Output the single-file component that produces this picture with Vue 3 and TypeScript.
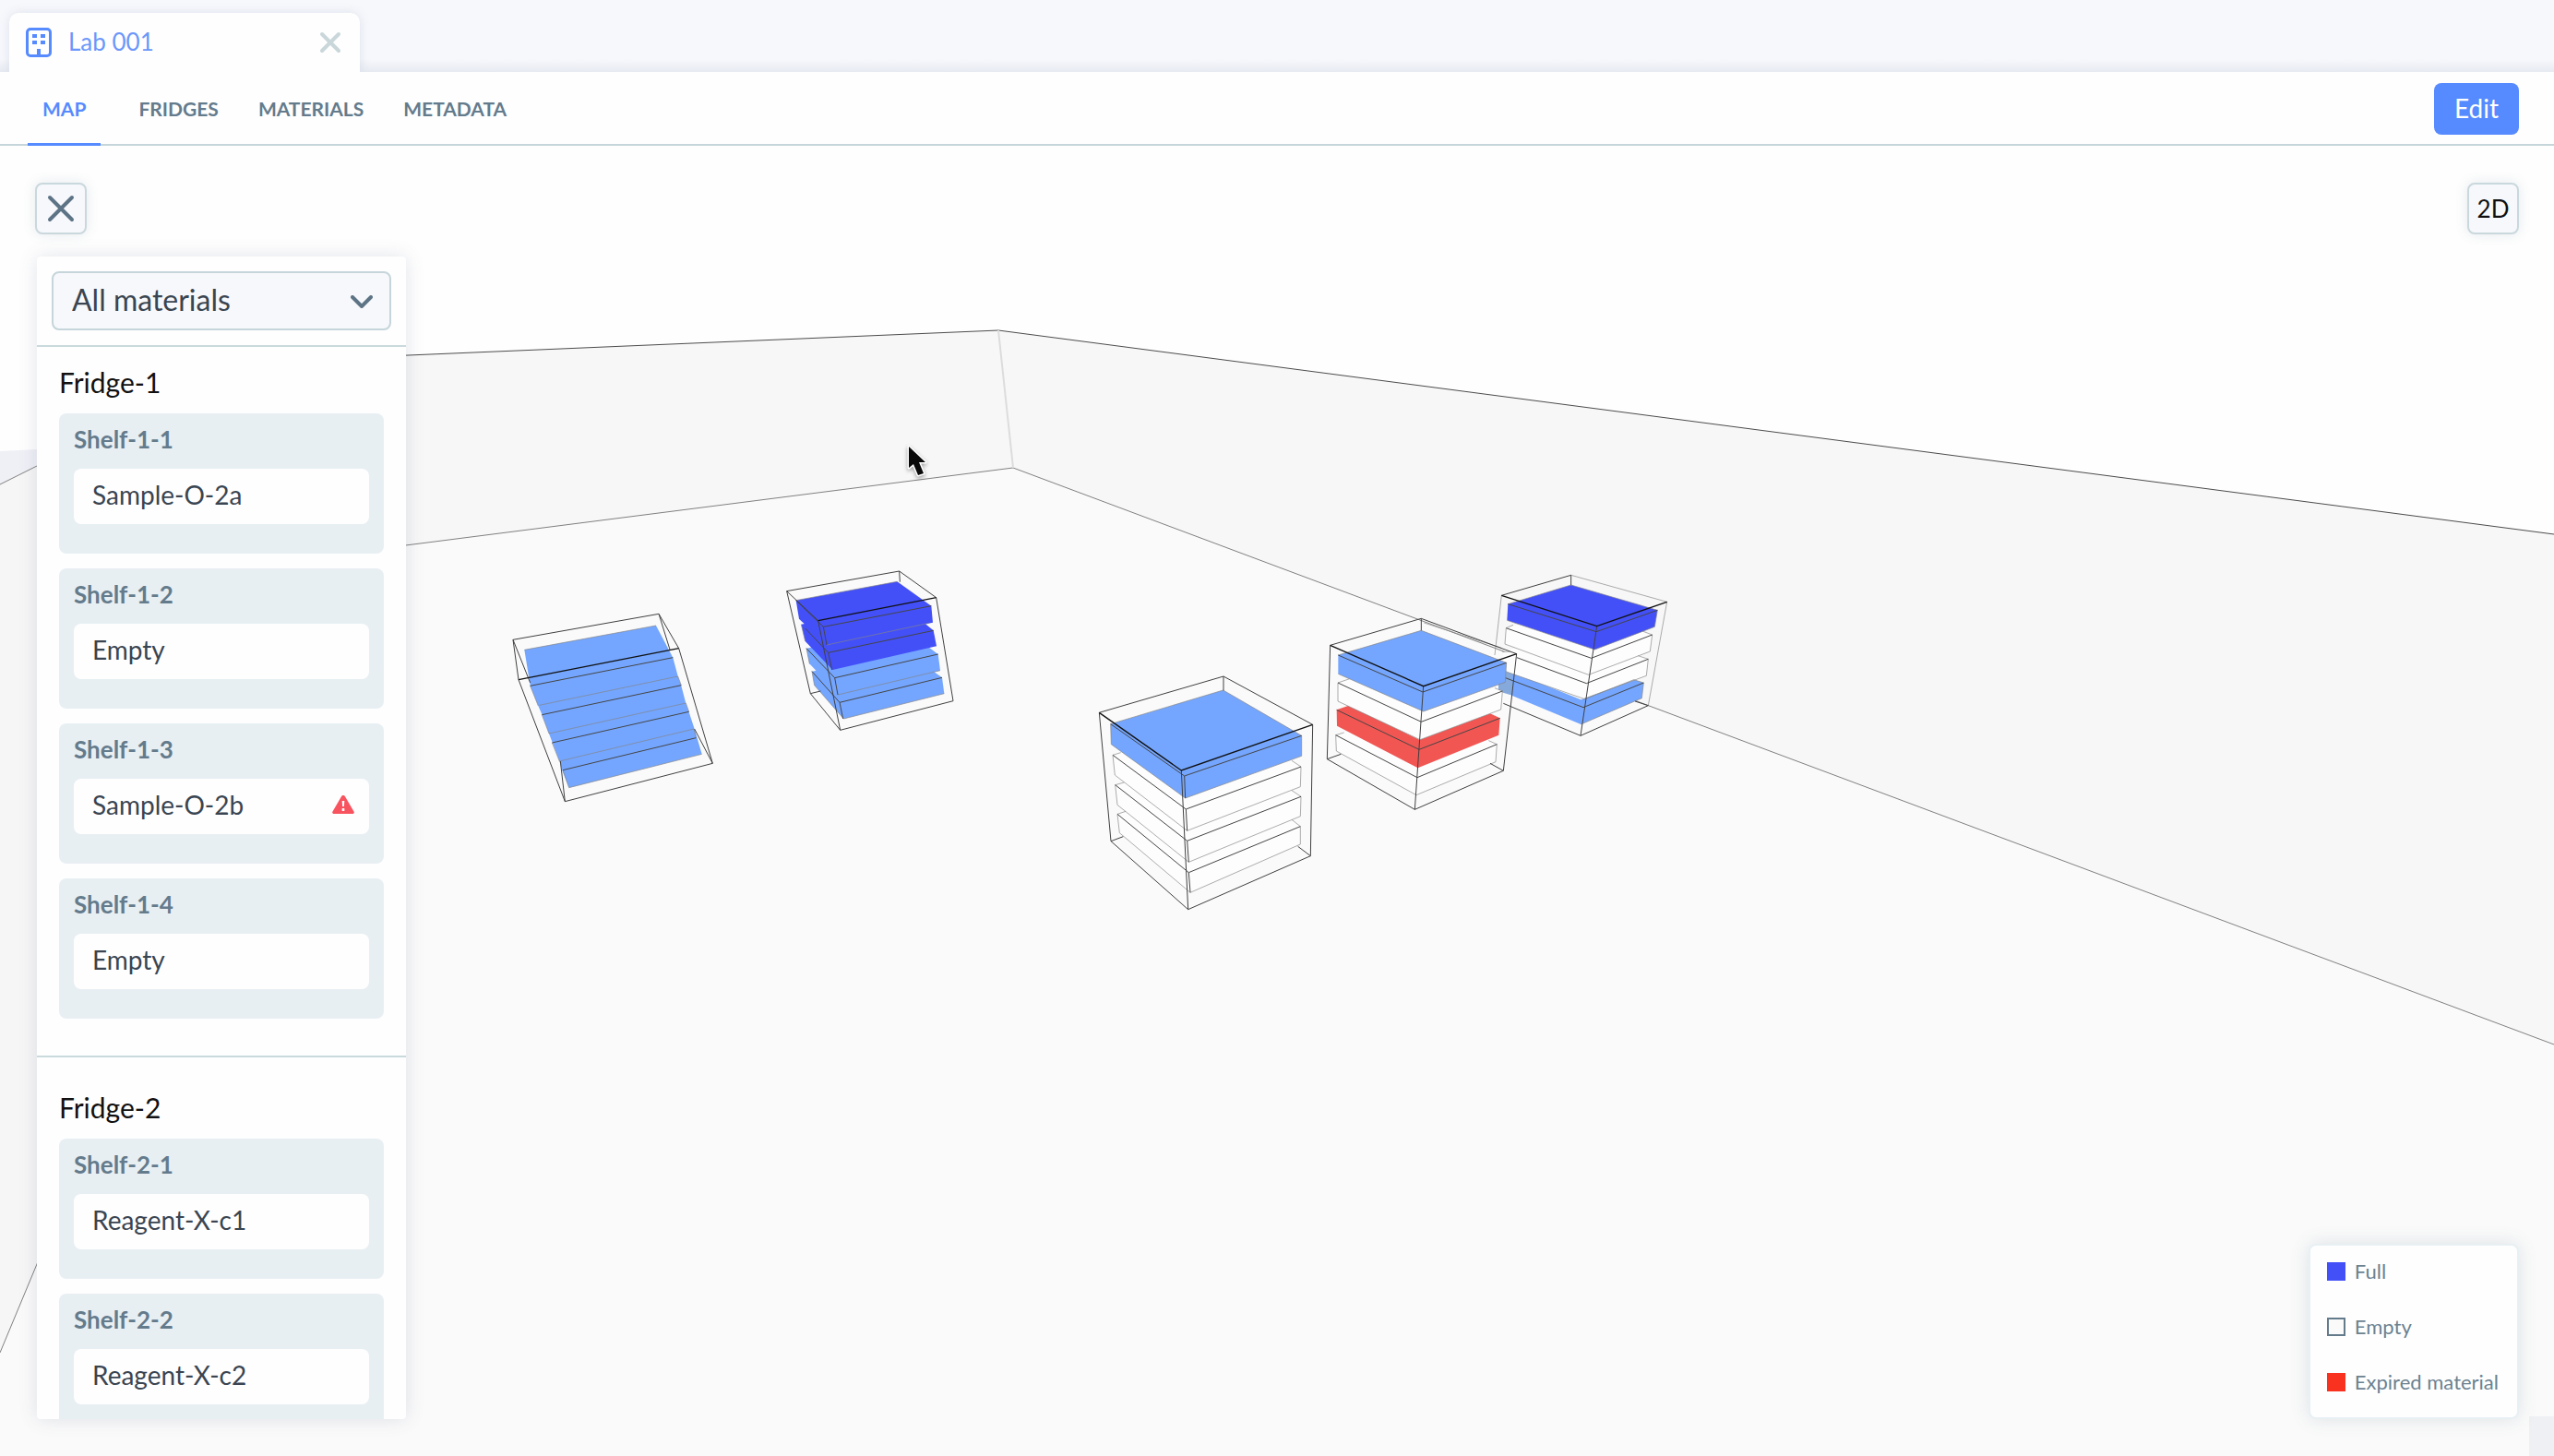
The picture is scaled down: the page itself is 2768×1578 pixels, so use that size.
<script setup lang="ts">
import { ref } from 'vue'

interface Shape { points: string; fill: string }
interface Fridge {
  x: number; y: number; w: number; h: number
  fills: Shape[]
  soft: string[]
  edges: string[]
  frame: string[]
  front: string[]
}
interface Shelf { name: string; material: string; expired?: boolean }

const BLUE = '#74a6ff'
const FULL = '#4350f8'
const RED = '#f15653'
const CLEAR = '#fdfdfd'

const views = ['MAP', 'FRIDGES', 'MATERIALS', 'METADATA']
const activeView = ref('MAP')
const filter = ref('All materials')

const groups: { name: string; shelves: Shelf[] }[] = [
  {
    name: 'Fridge-1',
    shelves: [
      { name: 'Shelf-1-1', material: 'Sample-O-2a' },
      { name: 'Shelf-1-2', material: 'Empty' },
      { name: 'Shelf-1-3', material: 'Sample-O-2b', expired: true },
      { name: 'Shelf-1-4', material: 'Empty' },
    ],
  },
  {
    name: 'Fridge-2',
    shelves: [
      { name: 'Shelf-2-1', material: 'Reagent-X-c1' },
      { name: 'Shelf-2-2', material: 'Reagent-X-c2' },
    ],
  },
]

const legend = [
  { label: 'Full', kind: 'full' },
  { label: 'Empty', kind: 'empty' },
  { label: 'Expired material', kind: 'expired' },
]

// Each fridge is drawn in its own local space, three units to a pixel.
const fridges: Fridge[] = [
  {
    x: 530, y: 640, w: 270, h: 250,
    fills: [{ fill: BLUE, points: '115,193 543,114 598,218 614,278 625,310 640,367 650,395 668,450 692,532 260,641 238,585 229,555 195,465 172,403 160,375 134,310' }],
    soft: ['164,373 614,279 625,308', '195,465 640,366 650,394', '229,555 666,450 673,479', '115,193 543,114', '134,310 160,375', '172,404 195,465', '205,495 229,555', '240,584 260,641 692,532'],
    edges: ['134,310 598,218', '172,404 625,308', '205,495 650,394', '240,584 673,479'],
    frame: ['78,160 552,76 617,188', '78,160 96,290 247,686 727,562 617,188', '78,160 134,300', '232,555 247,686', '552,76 588,192', '668,450 727,562'],
    front: ['96,290 617,188'],
  },
  {
    x: 830, y: 600, w: 220, h: 210,
    fills: [
      { fill: BLUE, points: '150,383 460,320 573,403 580,455 253,537 158,428' },
      { fill: BLUE, points: '132,308 450,245 560,327 567,380 236,459 142,358' },
      { fill: FULL, points: '115,230 440,165 545,250 555,301 217,378 128,285' },
      { fill: FULL, points: '98,152 427,91 538,170 543,224 198,297 108,212' },
    ],
    soft: ['198,297 530,226', '234,459 567,380', '150,383 158,428 253,537 580,455', '132,308 142,358', '98,152 427,91', '115,230 128,285'],
    edges: ['98,152 187,238 538,170', '187,238 198,297', '128,243 203,322 545,250', '203,322 215,378', '132,308 224,404 560,327', '224,404 234,459', '150,383 240,484 573,403', '240,484 251,537'],
    frame: ['68,122 434,57 554,143', '68,122 145,455 242,574 609,479 554,143', '68,122 170,218 242,574', '434,57 436,92', '145,455 178,447'],
    front: ['170,218 554,143'],
  },
  {
    x: 1420, y: 600, w: 410, h: 290,
    fills: [
      { fill: '#86a9dc', points: '612,400 640,380 660,386 660,462 612,448' },
      { fill: BLUE, points: '657,385 880,475 1052,410 1084,420 1078,470 880,555 657,462' },
      { fill: CLEAR, points: '625,320 890,240 1099,343 1093,397 890,472 640,385' },
      { fill: CLEAR, points: '637,242 890,170 1112,264 1105,318 905,394 633,294' },
      { fill: FULL, points: '643,164 848,102 1129,184 1120,238 925,312 640,217' },
    ],
    soft: ['637,242 633,294 905,394 1105,318 1112,264', '637,242 660,232', '1080,252 1112,264', '640,385 890,472 1093,397 1099,343', '625,320 650,318', '1066,332 1099,343', '640,217 925,312 1120,238 1129,184', '622,136 600,330', '848,70 1160,157 1099,494', '643,164 848,102 1129,184', '888,475 1052,410 1084,420 1078,470 880,555'],
    edges: ['643,164 930,254 1129,184', '637,242 914,340 1112,264', '672,338 898,422 1099,343', '632,403 888,500 1084,420'],
    frame: ['622,136 848,70', '848,70 848,102', '628,487 879,592 1099,494', '1056,480 1099,494', '932,236 879,592'],
    front: ['622,136 932,236 1160,157'],
  },
  {
    x: 1420, y: 600, w: 410, h: 290,
    fills: [
      { fill: CLEAR, points: '83,590 110,582 355,500 580,608 607,620 603,677 345,785 85,642' },
      { fill: RED, points: '86,508 125,494 355,605 585,520 617,535 613,590 350,697 87,560' },
      { fill: CLEAR, points: '90,420 128,407 361,330 600,437 625,447 620,507 357,605 90,480' },
      { fill: BLUE, points: '91,330 361,250 638,355 634,418 368,513 91,391' },
    ],
    soft: ['128,407 90,420 90,480 357,605 620,507 625,447 600,437', '110,582 83,590 85,642 345,785 603,677 607,620 580,608', '91,330 361,250 638,355 634,418 368,513 91,391', '370,225 620,306'],
    edges: ['91,330 366,450 638,355', '90,420 361,547 625,447', '86,508 354,637 617,535', '83,590 348,728 607,620'],
    frame: ['65,298 361,211 671,326 628,706 340,832 55,668 65,298', '361,211 361,250', '55,668 100,652', '585,682 628,706', '368,431 340,832'],
    front: ['65,298 368,431 671,326'],
  },
  {
    x: 1170, y: 710, w: 270, h: 290,
    fills: [
      { fill: CLEAR, points: '123,517 150,508 350,400 690,535 718,557 718,615 360,772 130,578' },
      { fill: CLEAR, points: '116,422 145,414 350,300 690,440 720,460 718,524 355,673 123,487' },
      { fill: CLEAR, points: '108,325 132,317 350,250 690,343 720,363 718,428 350,571 115,390' },
      { fill: BLUE, points: '101,224 467,114 722,262 722,328 344,465 103,290' },
    ],
    soft: ['134,317 108,325 115,390 350,571 718,428 720,363 690,343', '145,414 116,422 123,487 355,673 718,524 720,460 690,440', '150,508 123,517 130,578 360,772 718,615 718,557 690,535', '101,224 467,114 722,262 722,328 344,465 103,290 101,224'],
    edges: ['101,224 341,393 722,262', '341,393 344,465', '108,325 346,501 720,363', '346,501 350,571', '116,422 350,604 720,460', '350,604 355,673', '123,517 355,707 718,557', '355,707 360,772'],
    frame: ['64,187 468,69 758,226 751,653 353,827 102,605 64,187', '468,69 468,115', '102,605 142,590', '710,622 751,653', '331,375 353,827'],
    front: ['64,187 331,375 758,226'],
  },
]
</script>

<template>
  <div class="app">
    <header class="tab-strip">
      <div class="tab">
        <svg class="building" viewBox="0 0 28 32" aria-hidden="true">
          <path fill-rule="evenodd" d="M5 0h18a5 5 0 0 1 5 5v22a5 5 0 0 1-5 5H5a5 5 0 0 1-5-5V5a5 5 0 0 1 5-5zm0 3a2 2 0 0 0-2 2v22a2 2 0 0 0 2 2h7v-6h4v6h7a2 2 0 0 0 2-2V5a2 2 0 0 0-2-2zM7 7h5v4H7zm9 0h5v4h-5zM7 14h5v4H7zm9 0h5v4h-5z" />
        </svg>
        <a class="tab-name" href="#lab-001">Lab 001</a>
        <button class="tab-close" type="button" aria-label="Close tab">
          <svg viewBox="0 0 24 24" aria-hidden="true"><path d="M3 3l18 18M21 3L3 21" /></svg>
        </button>
      </div>
    </header>

    <div class="toolbar">
      <nav class="views">
        <a
          v-for="view in views"
          :key="view"
          :href="'#' + view.toLowerCase()"
          class="view"
          :class="{ active: view === activeView }"
          @click.prevent="activeView = view"
        >{{ view }}</a>
      </nav>
      <button class="edit" type="button">Edit</button>
    </div>

    <main class="stage">
      <svg class="scene" viewBox="0 158 2768 1420" preserveAspectRatio="xMinYMin slice" aria-hidden="true">
        <polygon fill="#fafafa" points="0,1466 40,1370 40,600 440,591 1098,507 2768,1132 2768,1578 0,1578" />
        <polygon fill="#f7f7f7" points="40,402 1082,358 2768,579 2768,1132 1098,507 440,591 40,642" />
        <polygon fill="#eff0f6" points="0,489 60,486 60,640 0,640" />
        <polygon fill="#f6f6f6" points="0,525 60,495 60,1322 0,1466" />
        <rect fill="#eff0f4" x="2741" y="1535" width="27" height="43" />
        <g class="room">
          <path d="M40 402L1082 358L2768 579" />
          <path class="dim" d="M40 642L1098 507L2768 1132" />
          <path class="dim" d="M0 525L60 495M0 1466L60 1322" />
          <path class="faint" d="M1082 358L1098 507" />
        </g>
        <svg
          v-for="(f, i) in fridges"
          :key="i"
          :x="f.x" :y="f.y" :width="f.w" :height="f.h"
          :viewBox="`0 0 ${f.w * 3} ${f.h * 3}`"
        >
          <polygon v-for="(s, k) in f.fills" :key="'s' + k" :points="s.points" :fill="s.fill" />
          <polyline v-for="(p, k) in f.soft" :key="'o' + k" class="soft" :points="p" />
          <polyline v-for="(p, k) in f.edges" :key="'e' + k" class="edge" :points="p" />
          <polyline v-for="(p, k) in f.frame" :key="'f' + k" class="frame" :points="p" />
          <polyline v-for="(p, k) in f.front" :key="'n' + k" class="front" :points="p" />
        </svg>
        <path class="cursor" d="M985 484V507L990 503L995 515L1001 513L996 501L1003 501Z" />
      </svg>

      <aside class="side">
        <button class="square" type="button" aria-label="Close panel">
          <svg viewBox="0 0 32 32" aria-hidden="true"><path d="M4 4l24 24M28 4L4 28" /></svg>
        </button>
        <section class="panel">
          <div class="filter">
            <select v-model="filter" aria-label="Filter materials">
              <option>All materials</option>
            </select>
            <svg class="chevron" viewBox="0 0 24 14" aria-hidden="true"><path d="M2 2l10 10L22 2" /></svg>
          </div>
          <div class="groups">
            <section v-for="g in groups" :key="g.name" class="group">
              <h2>{{ g.name }}</h2>
              <div v-for="s in g.shelves" :key="s.name" class="shelf">
                <h3>{{ s.name }}</h3>
                <div class="material">
                  <span>{{ s.material }}</span>
                  <svg v-if="s.expired" class="warning" viewBox="0 0 24 22" role="img" aria-label="Expired">
                    <path fill="#f8545f" d="M12 1c.9 0 1.6.5 2 1.200l9.500 16.300c.8 1.300 0 2.500-1.500 2.500H2c-1.500 0-2.300-1.200-1.500-2.500L10 2.200C10.400 1.500 11.100 1 12 1z" />
                    <path fill="#fff" d="M10.700 7h2.600l-.4 6h-1.800zM10.700 15h2.600v3h-2.600z" />
                  </svg>
                </div>
              </div>
            </section>
          </div>
        </section>
      </aside>

      <div class="right">
        <button class="square" type="button">2D</button>
        <ul class="legend">
          <li v-for="l in legend" :key="l.label"><i :class="l.kind"></i>{{ l.label }}</li>
        </ul>
      </div>
    </main>
  </div>
</template>

<style>
body { margin: 0; }
</style>

<style scoped>
.app {
  display: flex;
  flex-direction: column;
  height: 100vh;
  overflow: hidden;
  background: #fefefe;
  color: #3a4551;
  font-family: Lato, "Open Sans", sans-serif;
  font-size: 28px;
}
.app *, .app *::before { box-sizing: border-box; }
button { font: inherit; cursor: pointer; padding: 0; }
a { text-decoration: none; color: inherit; }

.tab-strip {
  display: flex;
  padding: 14px 10px 0;
  background: linear-gradient(#f7f8fc calc(100% - 14px), #e7eaf1);
}
.tab {
  display: flex;
  align-items: center;
  width: 380px;
  height: 64px;
  padding: 0 20px 0 18px;
  border-radius: 10px 10px 0 0;
  background: #fefefe;
  box-shadow: 0 0 12px rgba(90, 115, 150, .16);
  clip-path: inset(-14px -14px 0 -14px);
}
.building { width: 28px; height: 32px; fill: #568aff; }
.tab-name { flex: 1; margin-left: 18px; padding-bottom: 2px; color: #6c97fa; font-size: 26px; }
.tab-close { display: flex; border: 0; background: none; }
.tab-close svg { width: 24px; height: 24px; stroke: #c9d6da; stroke-width: 4; stroke-linecap: round; }

.toolbar {
  display: flex;
  justify-content: space-between;
  align-items: flex-start;
  height: 80px;
  padding: 0 38px 0 30px;
  border-bottom: 2px solid #c5d5da;
  background: #fefefe;
}
.views { display: flex; gap: 27px; }
.view {
  height: 80px;
  padding: 0 8px;
  border-bottom: 3px solid transparent;
  color: #647b8c;
  font-size: 21px;
  font-weight: 700;
  line-height: 80px;
}
.view:first-child { margin-right: 6px; padding: 0 16px; }
.view.active { border-color: #568aff; color: #568aff; }
.edit {
  width: 92px;
  height: 56px;
  margin-top: 12px;
  padding-bottom: 3px;
  border: 0;
  border-radius: 8px;
  background: #568aff;
  color: #fff;
}

.stage {
  position: relative;
  display: flex;
  flex: 1;
  justify-content: space-between;
  min-height: 0;
  padding: 40px 38px;
}
.scene { position: absolute; inset: 0; width: 100%; height: 100%; }
.scene polyline, .room path { fill: none; }
.room path { stroke: #4c4c4c; stroke-width: 1; }
.room .dim { stroke: #808080; }
.room .faint { stroke: #dcdcdc; stroke-width: 2; }
.soft { stroke: #838383; stroke-width: 2; }
.edge { stroke: #454545; stroke-width: 3; }
.frame { stroke: #404040; stroke-width: 3; }
.front { stroke: #111; stroke-width: 4; }
.cursor {
  fill: #0a0a0a;
  stroke: #fff;
  stroke-width: 3;
  stroke-linejoin: round;
  paint-order: stroke;
  filter: drop-shadow(0 2px 2px rgba(0, 0, 0, .35));
}

.side, .right { position: relative; display: flex; flex-direction: column; }
.side { gap: 24px; min-height: 0; }
.right { justify-content: space-between; align-items: flex-end; }
.square {
  display: flex;
  flex: none;
  align-items: center;
  justify-content: center;
  width: 56px;
  height: 56px;
  padding-bottom: 1px;
  border: 2px solid #c9d8dd;
  border-radius: 8px;
  background: #f7f8fc;
  box-shadow: 0 0 14px rgba(70, 100, 125, .14);
  color: #111;
  font-size: 26px;
}
.square svg { width: 32px; height: 32px; stroke: #5d7486; stroke-width: 4; stroke-linecap: round; }

.panel {
  display: flex;
  flex: 1;
  flex-direction: column;
  width: 400px;
  min-height: 0;
  margin-left: 2px;
  border-radius: 4px;
  background: #fefefe;
  box-shadow: 0 0 20px rgba(80, 95, 130, .16);
}
.filter { position: relative; flex: none; padding: 16px; border-bottom: 2px solid #c9d9dc; }
select {
  display: block;
  width: 100%;
  height: 64px;
  padding: 0 60px 4px 20px;
  appearance: none;
  border: 2px solid #c5d5da;
  border-radius: 8px;
  background: #f7f8fb;
  color: #3a4551;
  font: inherit;
  font-size: 32px;
}
.chevron {
  position: absolute;
  top: 42px;
  right: 36px;
  width: 24px;
  height: 14px;
  fill: none;
  stroke: #5d7486;
  stroke-width: 4;
  stroke-linecap: round;
  stroke-linejoin: round;
  pointer-events: none;
}
.groups { flex: 1; min-height: 0; overflow: hidden; }
.group { padding: 16px 24px 40px; border-bottom: 2px solid #c9d9dc; }
.group + .group { padding-top: 32px; }
h2, h3 { margin: 0; font-weight: 400; }
h2 { height: 56px; color: #111; font-size: 30px; line-height: 44px; }
.shelf {
  height: 152px;
  padding: 0 16px 32px;
  border-radius: 8px;
  background: #e8eff3;
}
.shelf + .shelf { margin-top: 16px; }
h3 { height: 60px; color: #647b8c; font-size: 26px; font-weight: 700; line-height: 56px; }
.material {
  display: flex;
  align-items: center;
  justify-content: space-between;
  height: 60px;
  padding: 0 16px 4px 20px;
  border-radius: 8px;
  background: #fefefe;
  font-size: 28px;
}
.warning { width: 24px; height: 22px; }

.legend {
  display: flex;
  flex-direction: column;
  gap: 32px;
  min-width: 228px;
  margin: 0;
  padding: 14px 20px 24px 18px;
  border: 2px solid #e8f0f4;
  border-radius: 8px;
  background: #fefefe;
  box-shadow: 0 0 20px rgba(70, 100, 125, .16);
  color: #6c8291;
  font-size: 22px;
  line-height: 28px;
  list-style: none;
}
.legend li { display: flex; align-items: center; gap: 10px; }
.legend i { width: 20px; height: 20px; }
.full { background: #4350f8; }
.empty { border: 2px solid #647b8c; background: #fafafa; }
.expired { background: #f9321f; }
</style>
